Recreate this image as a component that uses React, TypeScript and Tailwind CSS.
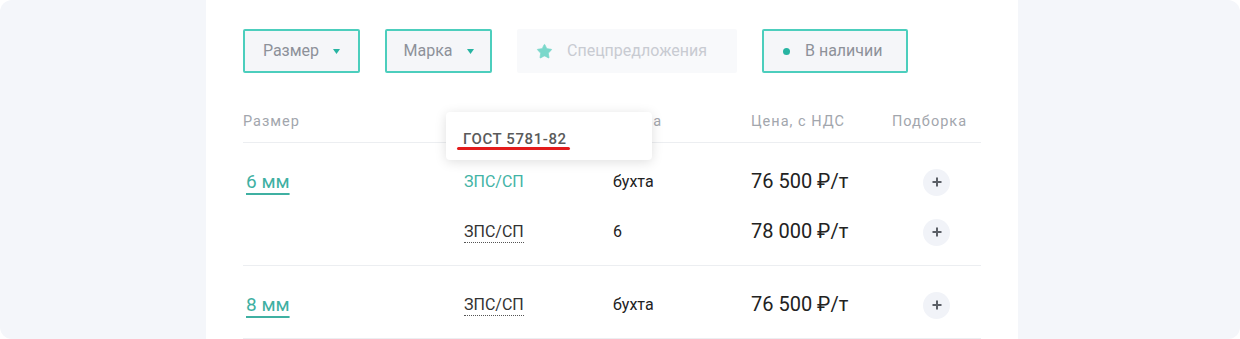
import React from "react";
import { Star } from "lucide-react";

const Caret = () => (
  <svg width="7" height="5" viewBox="0 0 7 5" className="shrink-0">
    <path d="M0 0h7L3.5 5z" fill="#27b4a2" />
  </svg>
);

const PlusButton = () => (
  <button className="ml-[31px] flex h-[27px] w-[27px] items-center justify-center rounded-full bg-[#f1f3f8]">
    <svg width="10" height="10" viewBox="0 0 10 10">
      <path d="M5 0.5v9M0.5 5h9" stroke="#5b5f66" strokeWidth="2" />
    </svg>
  </button>
);

type Line = {
  size?: string;
  mark: string;
  markLink: boolean;
  pack: string;
  price: string;
};

const groups: Line[][] = [
  [
    { size: "6 мм", mark: "ЗПС/СП", markLink: true, pack: "бухта", price: "76 500 ₽/т" },
    { mark: "ЗПС/СП", markLink: false, pack: "6", price: "78 000 ₽/т" },
  ],
  [{ size: "8 мм", mark: "ЗПС/СП", markLink: false, pack: "бухта", price: "76 500 ₽/т" }],
];

const cols = "grid grid-cols-[220px_150px_138px_141px_89px]";

export default function App() {
  return (
    <div
      className="h-[339px] w-[1240px] overflow-hidden bg-white"
      style={{ fontFamily: "Roboto, 'Noto Sans', sans-serif" }}
    >
      <div className="flex h-full rounded-[12px] bg-[#f4f6fa]">
        <div className="relative ml-[206px] h-full w-[812px] bg-white pl-[37px] pt-[29px]">
          {/* filters */}
          <div className="flex gap-[25px]">
            <button className="flex h-[44px] w-[117px] items-center justify-center gap-[14px] rounded-[2px] border-2 border-[#4ccebd] bg-[#f5f6f9] text-[16px] text-[#8d9199]">
              Размер <Caret />
            </button>
            <button className="flex h-[44px] w-[107px] items-center justify-center gap-[14px] rounded-[2px] border-2 border-[#4ccebd] bg-[#f5f6f9] text-[16px] text-[#8d9199]">
              Марка <Caret />
            </button>
            <button className="flex h-[44px] w-[220px] items-center gap-[14px] rounded-[2px] bg-[#f8f9fb] pl-[19px] text-[16px] text-[#c8cbd2]">
              <Star size={17} fill="#7ad8cb" stroke="#7ad8cb" strokeWidth={1} />
              Спецпредложения
            </button>
            <button className="flex h-[44px] w-[146px] items-center gap-[15px] rounded-[2px] border-2 border-[#4ccebd] bg-[#f5f6f9] pl-[19px] text-[16px] text-[#8d9199]">
              <span className="h-[7px] w-[7px] rounded-full bg-[#27b4a2]" />В наличии
            </button>
          </div>

          {/* table */}
          <div className="w-[738px]">
            <div className={`${cols} mt-[39px] border-b border-[#eceef1] pb-[10px] text-[14.5px] leading-[20px] tracking-[1px] text-[#a2a6ad]`}>
              <div>Размер</div>
              <div>Марка</div>
              <div>Длина</div>
              <div>Цена, с НДС</div>
              <div>Подборка</div>
            </div>

            {groups.map((g, gi) => (
              <div key={gi} className="flex flex-col gap-[22px] border-b border-[#eceef1] pb-[19px] pt-[25px]">
                {g.map((l, li) => (
                  <div key={li} className={`${cols} h-[28px] items-center`}>
                    <div className="pl-[3px]">
                      {l.size && (
                        <a className="text-[19px] leading-[24px] text-[#3fb0a2] underline decoration-2 underline-offset-[5px]">
                          {l.size}
                        </a>
                      )}
                    </div>
                    <div className="pl-px">
                      {l.markLink ? (
                        <span className="text-[16px] text-[#43b3a5]">{l.mark}</span>
                      ) : (
                        <span className="inline-block border-b border-dotted border-[#555] pb-[1px] text-[16px] leading-[18px] text-[#333]">
                          {l.mark}
                        </span>
                      )}
                    </div>
                    <div className="text-[16px] text-[#222]">{l.pack}</div>
                    <div className="-mt-[3px] text-[20px] text-[#222]">{l.price}</div>
                    <div>
                      <PlusButton />
                    </div>
                  </div>
                ))}
              </div>
            ))}
          </div>

          {/* tooltip */}
          <div className="absolute left-[240px] top-[112px] h-[48px] w-[206px] rounded-[4px] bg-white pl-[17px] pt-[15px] shadow-[0_2px_12px_rgba(0,0,0,0.13)]">
            <span className="text-[15px] font-medium leading-[20px] tracking-[0.6px] text-[#5a5a5a]">
              ГОСТ 5781-82
            </span>
            <div className="absolute left-[11px] top-[35px] h-[3px] w-[113px] rounded-full bg-[#e31b1b]" />
          </div>
        </div>
      </div>
    </div>
  );
}
